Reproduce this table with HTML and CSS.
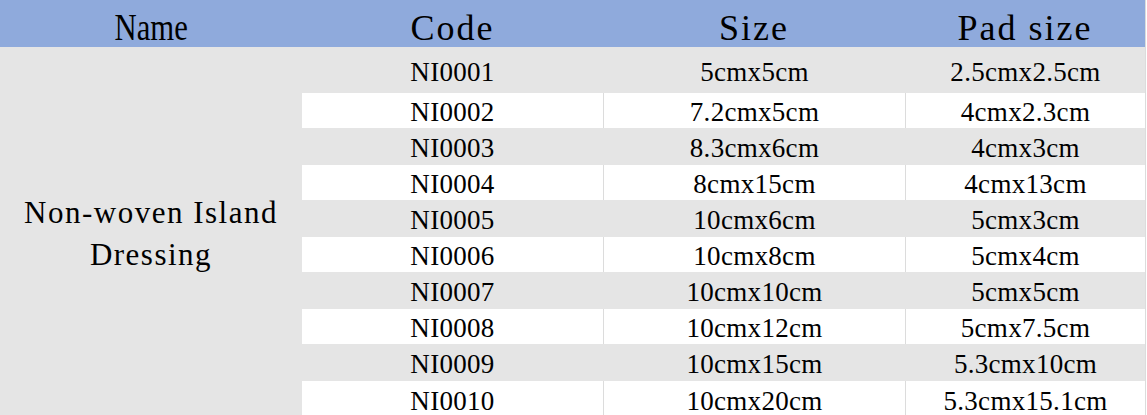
FILE: index.html
```html
<!DOCTYPE html>
<html>
<head>
<meta charset="utf-8">
<link rel="stylesheet" href="styles.css">
</head>
<body>
<div class="table">
  <div class="head">
    <div class="hc"><span class="hname">Name</span></div>
    <div class="hc">Code</div>
    <div class="hc">Size</div>
    <div class="hc">Pad size</div>
  </div>
  <div class="body">
    <div class="name"><p>Non-woven Island<br>Dressing</p></div>
    <div class="rows">
      <div class="row g first"><div class="c">NI0001</div><div class="c">5cmx5cm</div><div class="c">2.5cmx2.5cm</div></div>
      <div class="row w"><div class="c">NI0002</div><div class="c">7.2cmx5cm</div><div class="c">4cmx2.3cm</div></div>
      <div class="row g"><div class="c">NI0003</div><div class="c">8.3cmx6cm</div><div class="c">4cmx3cm</div></div>
      <div class="row w"><div class="c">NI0004</div><div class="c">8cmx15cm</div><div class="c">4cmx13cm</div></div>
      <div class="row g"><div class="c">NI0005</div><div class="c">10cmx6cm</div><div class="c">5cmx3cm</div></div>
      <div class="row w"><div class="c">NI0006</div><div class="c">10cmx8cm</div><div class="c">5cmx4cm</div></div>
      <div class="row g"><div class="c">NI0007</div><div class="c">10cmx10cm</div><div class="c">5cmx5cm</div></div>
      <div class="row w"><div class="c">NI0008</div><div class="c">10cmx12cm</div><div class="c">5cmx7.5cm</div></div>
      <div class="row g"><div class="c">NI0009</div><div class="c">10cmx15cm</div><div class="c">5.3cmx10cm</div></div>
      <div class="row w last"><div class="c">NI0010</div><div class="c">10cmx20cm</div><div class="c">5.3cmx15.1cm</div></div>
    </div>
  </div>
</div>
</body>
</html>
```
FILE: styles.css
```css
html, body {
  margin: 0;
  padding: 0;
  background: #ffffff;
  overflow: hidden;
}
body {
  font-family: "Liberation Serif", "Times New Roman", serif;
  color: #000;
}
.table {
  width: 1145px;
  border-right: 1px solid #dcdcdc;
}
.head {
  display: grid;
  grid-template-columns: 302px 301px 302px 240px;
  height: 47px;
  background: #8faadc;
}
.hc {
  display: flex;
  align-items: center;
  justify-content: center;
  font-size: 36px;
  letter-spacing: 2px;
  padding-top: 6px;
  box-sizing: border-box;
}
.hname {
  display: inline-block;
  font-size: 37px;
  letter-spacing: 0;
  transform: scaleX(0.83);
}
.body {
  display: flex;
}
.name {
  width: 302px;
  flex: none;
  background: #e5e5e5;
  display: flex;
  align-items: center;
  justify-content: center;
}
.name p {
  margin: 0;
  padding-top: 2px;
  text-align: center;
  font-size: 31px;
  letter-spacing: 1.5px;
  line-height: 42px;
}
.rows {
  display: flex;
  flex-direction: column;
}
.row {
  display: grid;
  grid-template-columns: 301px 302px 240px;
  font-size: 27px;
  letter-spacing: 0.3px;
}
.row.g {
  height: 37px;
  background: #e5e5e5;
}
.row.first {
  height: 46px;
}
.row.w {
  height: 35px;
  background: #ffffff;
}
.row.last {
  height: 37px;
}
.c {
  display: flex;
  align-items: center;
  justify-content: center;
  padding-top: 4px;
  box-sizing: border-box;
}
.c + .c {
  border-left: 1px solid transparent;
}
.row.w .c + .c {
  border-left-color: #dcdcdc;
}
```
